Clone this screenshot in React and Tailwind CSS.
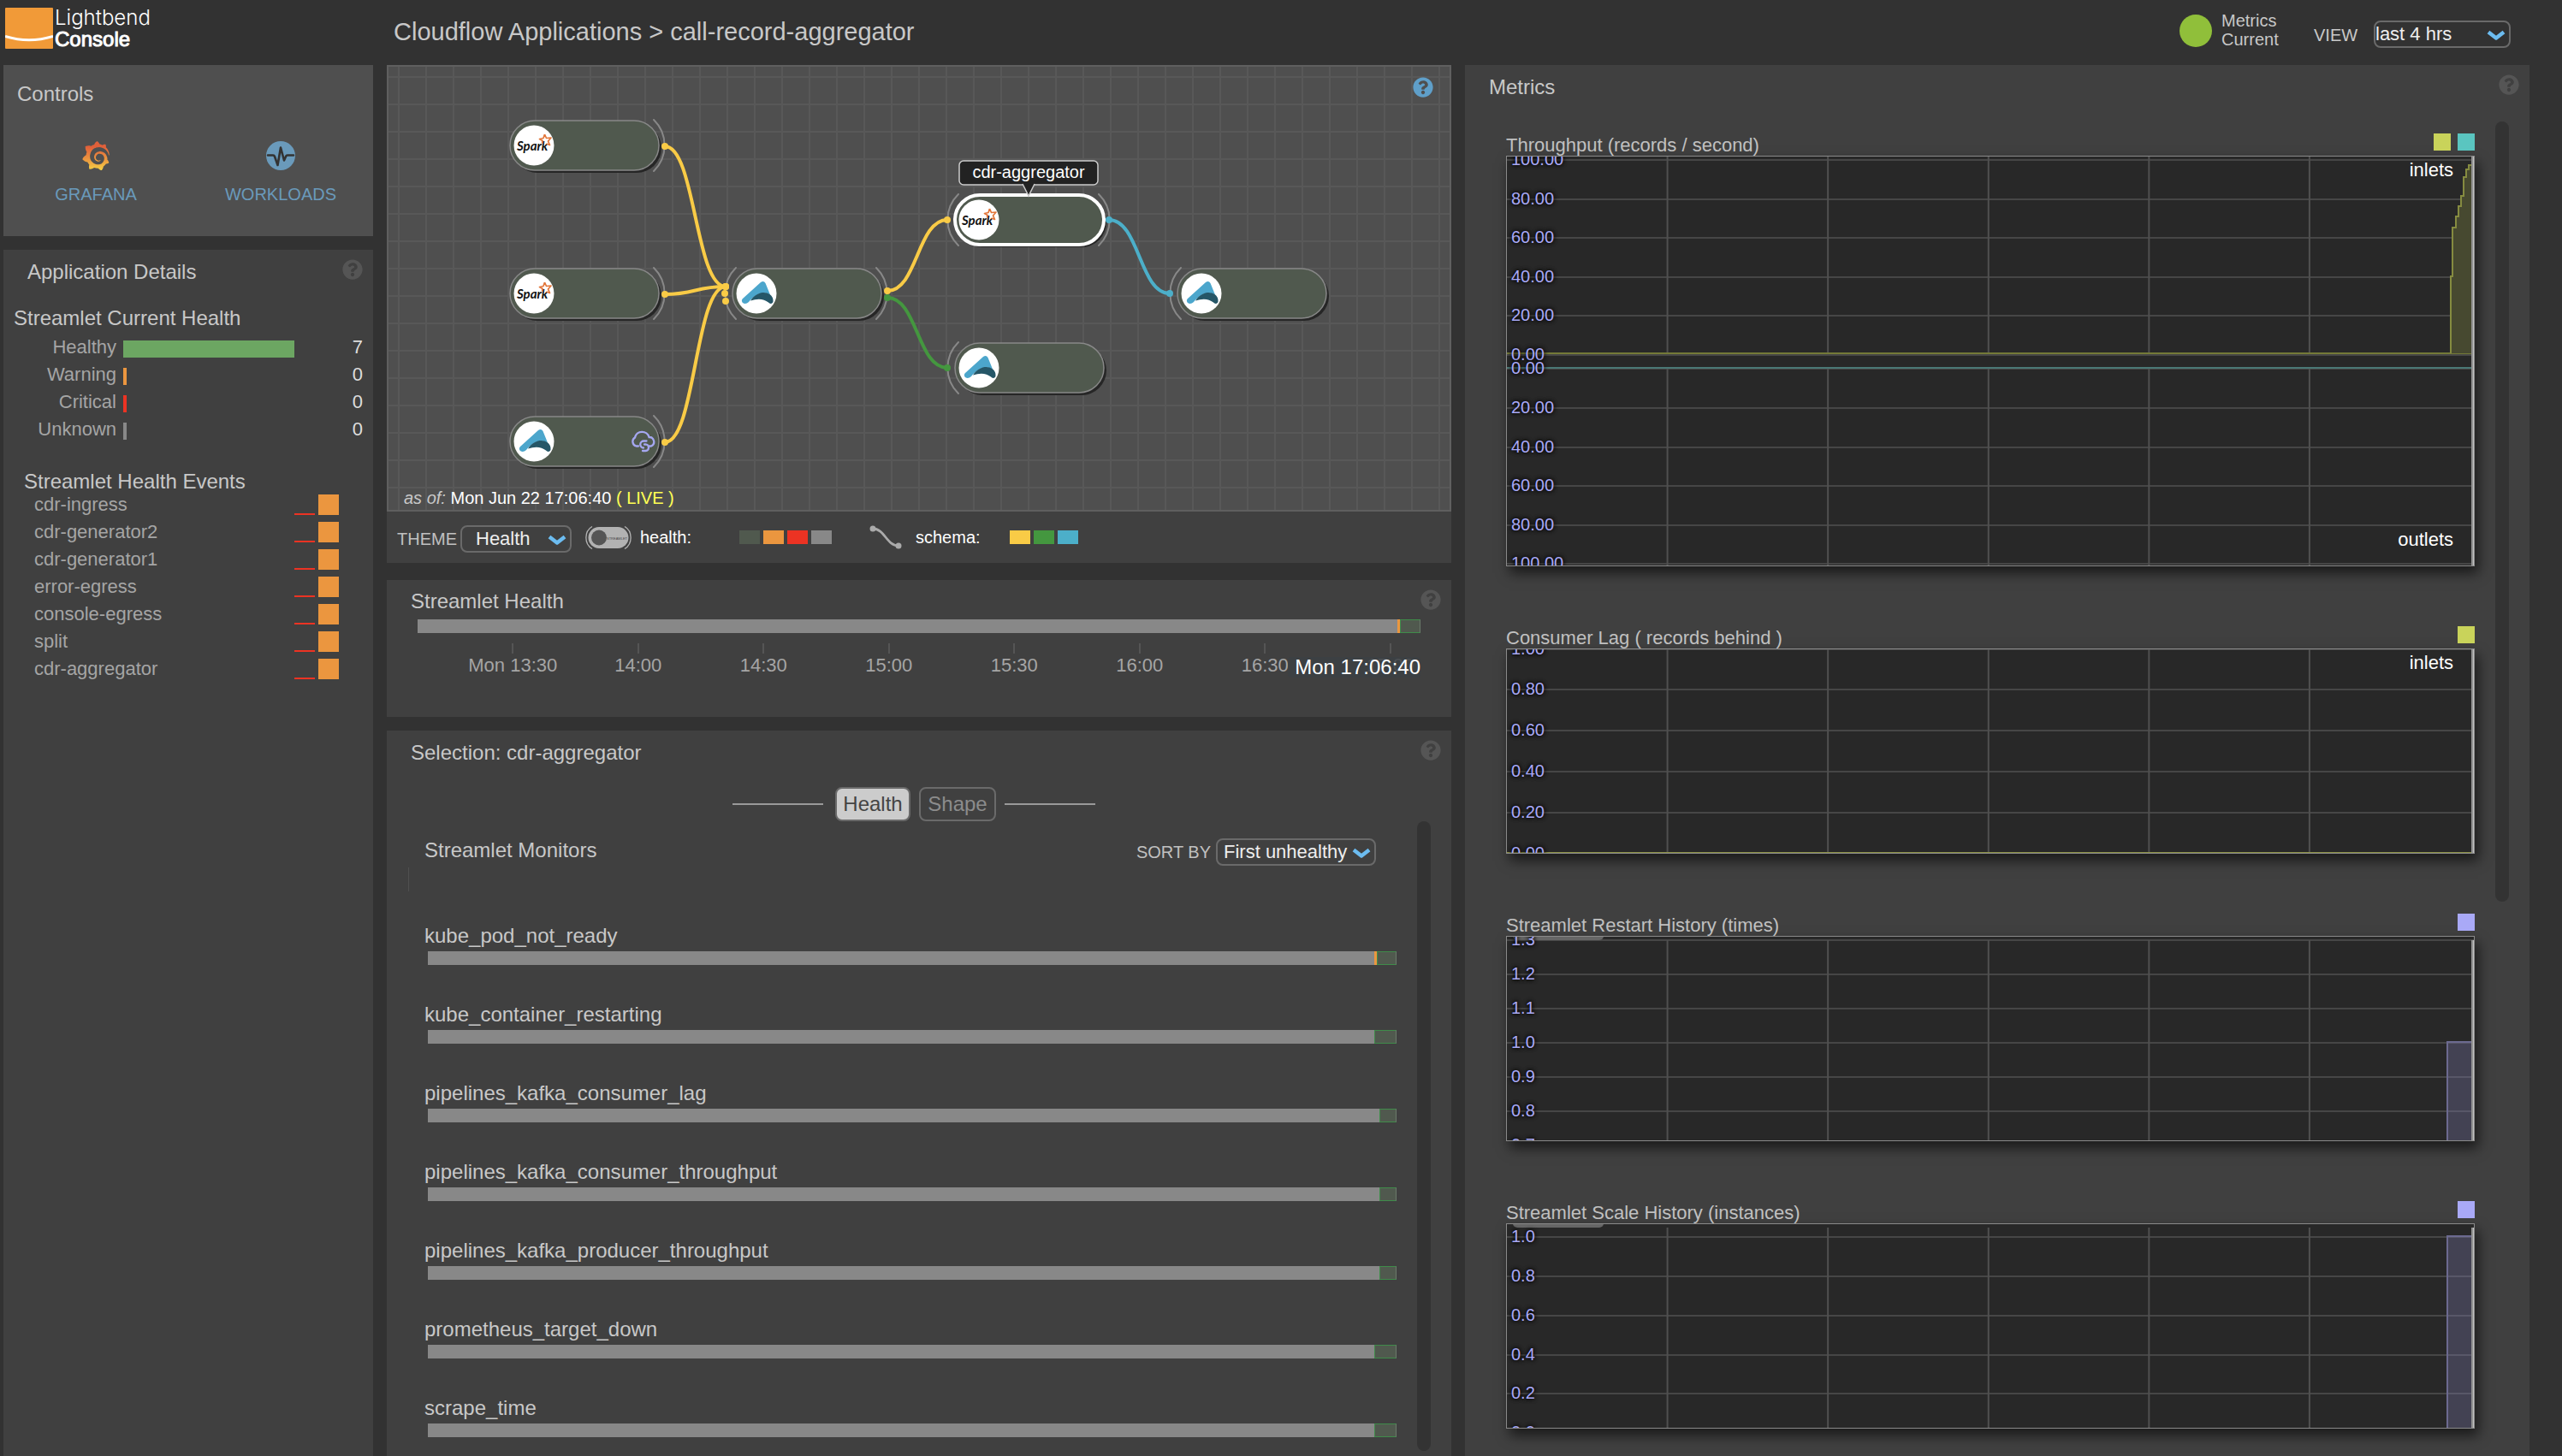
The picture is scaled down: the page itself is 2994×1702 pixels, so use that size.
import { FaQuestionCircle } from "react-icons/fa";
import { SiGrafana } from "react-icons/si";

const FONT = "font-['Liberation_Sans',Arial,sans-serif]";

function HelpButton({ blue }) {
  return (
    <button
      type="button"
      aria-label="Help"
      className={"absolute " + (blue ? "top-3 right-[19px] text-[#5f9fc9]" : "top-[11px] right-3 text-[#555555]")}
    >
      <FaQuestionCircle className="size-6" />
    </button>
  );
}

function Select({ id, label, value, box, field }) {
  return (
    <div className={"relative " + box}>
      <select
        id={id}
        aria-label={label}
        defaultValue={value}
        className={
          "block h-8 w-full appearance-none rounded-lg border-2 border-[#6a6a6a] bg-transparent text-[22px] leading-7 text-[#eeeeee] " +
          field
        }
      >
        <option>{value}</option>
      </select>
      <svg viewBox="0 0 22 14" className="pointer-events-none absolute top-[11px] right-1.5 h-[14px] w-[22px]" fill="none">
        <path d="M2 2.5 L11 9.5 L20 2.5" stroke="#6cbcf0" strokeWidth="4.5" strokeLinejoin="round" />
      </svg>
    </div>
  );
}

/* ---------- header ---------- */

function Header() {
  return (
    <header className="flex h-[76px] shrink-0 items-start">
      <div className="flex w-[448px] shrink-0 items-start gap-0.5 pt-2 pl-0.5">
        <svg viewBox="0 0 56 50" className="h-[50px] w-14">
          <rect x="0" y="1" width="56" height="48" rx="1" fill="#f19a38" />
          <path d="M0 34.5 Q28 43 56 34.5" stroke="#ffffff" strokeWidth="3" fill="none" />
        </svg>
        <div className="text-white">
          <div className="font-['Inter',sans-serif] text-[24px] leading-[26px] font-light">Lightbend</div>
          <div className="text-[24px] leading-6 [-webkit-text-stroke:1px_white]">Console</div>
        </div>
      </div>
      <h1 className="flex-1 pt-[19px] pl-2 text-[29px] leading-9 text-[#c8c8c8]">
        Cloudflow Applications &gt; call-record-aggregator
      </h1>
      <div className="flex items-start pr-[22px] text-[20px] text-[#c8c8c8]">
        <span className="mt-[17px] size-[38px] rounded-full bg-[#90bf3a]" />
        <p className="mt-[13px] ml-[11px] w-[108px] leading-[22px]">
          Metrics
          <br />
          Current
        </p>
        <label htmlFor="view" className="mt-[27px] w-[70px] leading-7">
          VIEW
        </label>
        <Select id="view" value="last 4 hrs" box="mt-6 w-40" field="pl-0" />
      </div>
    </header>
  );
}

/* ---------- left column ---------- */

const healthCounts = [
  { name: "Healthy", count: 7, bar: "w-[200px] bg-[#6ca662]" },
  { name: "Warning", count: 0, bar: "w-1 bg-[#eb963f]" },
  { name: "Critical", count: 0, bar: "w-1 bg-[#ec3323]" },
  { name: "Unknown", count: 0, bar: "w-1 bg-[#888888]" },
];

const events = [
  "cdr-ingress",
  "cdr-generator2",
  "cdr-generator1",
  "error-egress",
  "console-egress",
  "split",
  "cdr-aggregator",
];

function Sidebar() {
  return (
    <aside className="flex w-[432px] shrink-0 flex-col gap-4">
      <section className="h-[200px] bg-[#4f4f4f] pt-5 text-[#c8c8c8]">
        <h2 className="pl-4 text-[24px] leading-7">Controls</h2>
        <div className="mt-[41px] grid grid-cols-2 text-center text-[20px] leading-7 text-[#6a9abb]">
          <a href="#grafana" className="flex flex-col items-center gap-[14px]">
            <svg width="0" height="0" className="absolute">
              <linearGradient id="grafana-fill" x1="0" y1="0" x2="0" y2="1">
                <stop offset="0.2" stopColor="#e0603a" />
                <stop offset="0.65" stopColor="#eb9a40" />
                <stop offset="1" stopColor="#f5d145" />
              </linearGradient>
            </svg>
            <SiGrafana className="size-[34px]" fill="url(#grafana-fill)" />
            GRAFANA
          </a>
          <a href="#workloads" className="flex flex-col items-center gap-[14px]">
            <svg viewBox="0 0 34 34" className="size-[34px]" fill="none">
              <circle cx="17" cy="17" r="17" fill="#6a9abb" />
              <path
                d="M2 16.5 H8 Q9.5 16.5 10 18 L13.5 28 L17 7.5 L21 22.5 L23 18 Q23.5 16.5 25 16.5 H32"
                stroke="#333333"
                strokeWidth="2.6"
                strokeLinecap="round"
                strokeLinejoin="round"
              />
            </svg>
            WORKLOADS
          </a>
        </div>
      </section>

      <section className="relative flex-1 bg-[#404040] pt-2">
        <HelpButton />
        <h2 className="pl-7 text-[24px] leading-9 text-[#c8c8c8]">Application Details</h2>
        <h3 className="mt-5 pl-3 text-[24px] leading-8 text-[#c8c8c8]">Streamlet Current Health</h3>
        <div className="mt-1">
          {healthCounts.map((h) => (
            <div key={h.name} className="flex h-8 items-start pr-3 text-[22px] leading-7">
              <span className="w-[132px] text-right text-[#a5a5a5]">{h.name}</span>
              <span className={"mt-1.5 ml-2 h-5 " + h.bar} />
              <span className="ml-auto text-[#dddddd]">{h.count}</span>
            </div>
          ))}
        </div>
        <h3 className="mt-8 pl-6 text-[24px] leading-[22px] text-[#c8c8c8]">Streamlet Health Events</h3>
        <ul>
          {events.map((e) => (
            <li key={e} className="flex h-8 items-center pr-10 pl-9 text-[22px] leading-8 text-[#a5a5a5]">
              {e}
              <span className="mr-1 mb-1 ml-auto h-0.5 w-6 self-end bg-[#ec3323]" />
              <span className="size-6 bg-[#eb963f]" />
            </li>
          ))}
        </ul>
      </section>
    </aside>
  );
}

/* ---------- blueprint diagram ---------- */

const nodes = [
  { x: 596, y: 170, kind: "spark", out: true },
  { x: 596, y: 343, kind: "spark", out: true },
  { x: 596, y: 516, kind: "akka", out: true, ingress: true },
  { x: 856, y: 343, kind: "akka", in: true, out: true },
  { x: 1116, y: 257, kind: "spark", in: true, out: true, selected: true },
  { x: 1116, y: 430, kind: "akka", in: true },
  { x: 1376, y: 343, kind: "akka", in: true },
];

const Y = "#f9cb46";
const G = "#44973f";
const B = "#4cafc9";

const wires = [
  { from: [777, 171], to: [848, 335], color: Y },
  { from: [777, 344], to: [848, 335], color: Y },
  { from: [777, 517], to: [848, 335], color: Y },
  { from: [1037, 340], to: [1107, 257], color: Y },
  { from: [1037, 348], to: [1107, 430], color: G },
  { from: [1296, 257], to: [1367, 343], color: B },
];

function SparkLogo() {
  return (
    <>
      <text
        x="-20"
        y="6"
        fontSize="15"
        fontStyle="italic"
        fontWeight="700"
        fill="#111111"
        fontFamily="Lato, sans-serif"
      >
        Spark
      </text>
      <path
        d="M12.5 -13 L14.5 -8.5 L20 -9 L16.5 -5 L18.5 -0.5 L14.5 -2 M9.5 -2.5 L10 -5.5 L6.5 -7.5 L11 -8.5 L12.5 -13"
        fill="none"
        stroke="#e2763a"
        strokeWidth="1.7"
        strokeLinejoin="round"
      />
    </>
  );
}

function AkkaLogo() {
  return (
    <>
      <path
        d="M-16 6 L5 -13 Q8.5 -15.5 10.5 -12 L16 1.5 C8 -3 -1 0 -9 10 C-11.5 12.5 -15 12.5 -16.5 10.5 Q-18 8 -16 6 Z"
        fill="#4ca6cc"
      />
      <path d="M-7 8.5 C0 -2 10 -2.5 15.5 1 Q20 4.5 19.5 9.5 C19 12.5 15.5 12.5 14 10.5 Q6 4 -7 8.5 Z" fill="#255667" />
    </>
  );
}

function Node({ n }) {
  return (
    <g transform={`translate(${n.x} ${n.y})`}>
      <rect x="3" y="-26" width="174" height="58" rx="29" fill="#262626" />
      <rect
        x="0"
        y="-29"
        width="174"
        height="58"
        rx="29"
        fill="#50594e"
        stroke={n.selected ? "#ffffff" : "#888888"}
        strokeWidth={n.selected ? 4 : 1.5}
      />
      {n.out && <path d="M168 -30 A42 42 0 0 1 168 30" fill="none" stroke="#888888" strokeWidth="2" strokeLinecap="round" />}
      {n.in && <path d="M4 -30 A42 42 0 0 0 4 30" fill="none" stroke="#888888" strokeWidth="2" strokeLinecap="round" />}
      <g transform="translate(28 0)">
        <circle r="23.5" fill="#ffffff" />
        {n.kind === "spark" ? <SparkLogo /> : <AkkaLogo />}
      </g>
      {n.ingress && (
        <path
          d="M150 5.5 H147.500 A5.500 5.500 0 0 1 146 -4.500 A8.500 8.500 0 0 1 162.500 -5 A5.500 5.500 0 0 1 165 5.500 H163 M159.500 -0.500 H156.500 A4 4 0 0 0 156 7.500 M157 3.500 H159 A3.800 3.800 0 0 1 158.500 11 H155"
          fill="none"
          stroke="#a5a7f0"
          strokeWidth="2.3"
          strokeLinecap="round"
        />
      )}
    </g>
  );
}

function Blueprint() {
  return (
    <div className="relative border-2 border-[#5f5f5f] bg-[#4f4f4f] bg-[linear-gradient(to_right,#585858_2px,transparent_2px),linear-gradient(to_bottom,#585858_2px,transparent_2px)] bg-[size:32px_32px] bg-[position:11px_11px]">
      <svg className="block h-[518px] w-full">
        <g transform="translate(-454 -78)">
          {nodes.map((n) => (
            <Node key={`${n.x}-${n.y}`} n={n} />
          ))}
          {wires.map((w, i) => {
            const mid = (w.from[0] + w.to[0]) / 2;
            return (
              <g key={i}>
                <path
                  d={`M${w.from[0]} ${w.from[1]} C${mid} ${w.from[1]} ${mid} ${w.to[1]} ${w.to[0]} ${w.to[1]}`}
                  fill="none"
                  stroke={w.color}
                  strokeWidth="4"
                />
                <circle cx={w.from[0]} cy={w.from[1]} r="4" fill={w.color} />
                <circle cx={w.to[0]} cy={w.to[1]} r="4" fill={w.color} />
              </g>
            );
          })}
          <circle cx="847" cy="343" r="4" fill={Y} />
          <circle cx="848" cy="352" r="4" fill={Y} />
          <rect x="1121" y="188" width="162" height="28" rx="5" fill="#222222" stroke="#cccccc" strokeWidth="1.5" />
          <path d="M1195 215 L1202 229 L1209 215" fill="#222222" stroke="#cccccc" strokeWidth="1.5" />
          <text x="1202" y="208" textAnchor="middle" fontSize="20" fill="#ffffff">
            cdr-aggregator
          </text>
        </g>
      </svg>
      <HelpButton blue />
      <p className="absolute bottom-0 left-[18px] text-[20px] leading-7 text-white">
        <i className="text-[#c8c8c8]">as of:</i> Mon Jun 22 17:06:40 <span className="text-[#ffff54]">( LIVE )</span>
      </p>
    </div>
  );
}

function Toolbar() {
  return (
    <div className="flex h-[60px] items-center bg-[#404040] pl-3 text-[20px] leading-7">
      <div className="mt-1 flex items-center">
        <label htmlFor="theme" className="w-[74px] text-[#c0c0c0]">
          THEME
        </label>
        <Select id="theme" value="Health" box="w-[130px]" field="pl-4" />
      </div>
      <svg viewBox="0 0 54 27" className="ml-4 h-[27px] w-[54px]" fill="none">
        <rect x="3.5" y="1" width="47" height="25" rx="12.5" fill="#b2b2b2" />
        <circle cx="16" cy="13.5" r="9" fill="#555555" />
        <path d="M8 0.5 C-1.5 6 -1.5 21 8 26.5 M46 0.5 C55.5 6 55.5 21 46 26.5" stroke="#b2b2b2" strokeWidth="1.3" />
        <text x="25" y="15.500" fontSize="4" fill="#444444">
          STREAMLET
        </text>
      </svg>
      <span className="ml-2.5 w-[116px] text-white">health:</span>
      <div className="flex gap-1">
        <span className="h-4 w-6 bg-[#50594e]" />
        <span className="h-4 w-6 bg-[#eb963f]" />
        <span className="h-4 w-6 bg-[#ec3323]" />
        <span className="h-4 w-6 bg-[#888888]" />
      </div>
      <svg viewBox="0 0 38 28" className="ml-11 h-7 w-[38px]" fill="none">
        <path d="M4 4 C18 4 20 24 34 24" stroke="#aaaaaa" strokeWidth="2.8" />
        <circle cx="4" cy="4" r="3.5" fill="#aaaaaa" />
        <circle cx="34" cy="24" r="3.5" fill="#aaaaaa" />
      </svg>
      <span className="ml-4 w-[110px] text-white">schema:</span>
      <div className="flex gap-1">
        <span className="h-4 w-6 bg-[#f9cb46]" />
        <span className="h-4 w-6 bg-[#44973f]" />
        <span className="h-4 w-6 bg-[#4cafc9]" />
      </div>
    </div>
  );
}

/* ---------- health bars ---------- */

function HealthBar({ warn, okWidth }) {
  return (
    <div className="flex h-4">
      <span className="flex-1 bg-[#888888]" />
      {warn && <span className="w-[3px] bg-[#eb963f]" />}
      <span className={"border border-[#3f8c4a] border-r-[#6a7a6a] bg-[#50594e] " + okWidth} />
    </div>
  );
}

const ticks = ["Mon 13:30", "14:00", "14:30", "15:00", "15:30", "16:00", "16:30", "17:00"];

function StreamletHealth() {
  return (
    <section className="relative mt-5 h-40 shrink-0 overflow-hidden bg-[#404040] pt-[11px]">
      <HelpButton />
      <h2 className="pl-7 text-[24px] leading-7 text-[#c8c8c8]">Streamlet Health</h2>
      <div className="mx-9 mt-[7px]">
        <HealthBar warn okWidth="w-6" />
        <div className="relative mt-3">
          <div className="flex text-[22px] leading-7 text-[#a5a5a5]">
            <span className="w-[38px] shrink-0" />
            {ticks.map((t) => (
              <div key={t} className="flex w-1/8 shrink-0 flex-col items-center">
                <span className="h-3 w-0.5 bg-[#555555]" />
                {t}
              </div>
            ))}
          </div>
          <span className="absolute top-4 right-0 rounded-sm bg-[#3c4144]/85 pl-2 text-[24px] leading-6 text-white">
            Mon 17:06:40
          </span>
        </div>
      </div>
    </section>
  );
}

const monitors = [
  { name: "kube_pod_not_ready", warn: true, ok: "w-[23px]" },
  { name: "kube_container_restarting", ok: "w-[26px]" },
  { name: "pipelines_kafka_consumer_lag", ok: "w-5" },
  { name: "pipelines_kafka_consumer_throughput", ok: "w-5" },
  { name: "pipelines_kafka_producer_throughput", ok: "w-5" },
  { name: "prometheus_target_down", ok: "w-[26px]" },
  { name: "scrape_time", ok: "w-[26px]" },
];

function Selection() {
  return (
    <section className="relative mt-4 flex min-h-0 flex-1 flex-col bg-[#404040] pt-3">
      <HelpButton />
      <h2 className="pl-7 text-[24px] leading-7 text-[#c8c8c8]">Selection: cdr-aggregator</h2>
      <div className="mt-[26px] flex items-center justify-center gap-2.5 pr-3 text-[24px] leading-9">
        <span className="h-0.5 w-[106px] bg-[#999999]" />
        <button
          type="button"
          className="ml-1 h-10 w-[88px] rounded-lg border-2 border-[#6a6a6a] bg-[#cccccc] text-[#444444]"
        >
          Health
        </button>
        <button type="button" className="h-10 w-[90px] rounded-lg border-2 border-[#6a6a6a] text-[#8c8c8c]">
          Shape
        </button>
        <span className="h-0.5 w-[106px] bg-[#999999]" />
      </div>
      <div className="flex min-h-0 flex-1 pr-6">
        <div className="flex-1 overflow-hidden pt-5">
          <div className="flex items-center pr-12 pl-11">
            <h3 className="self-start text-[24px] leading-7 text-[#c8c8c8]">Streamlet Monitors</h3>
            <label htmlFor="sort" className="ml-auto pr-1.5 text-[20px] leading-8 text-[#c0c0c0]">
              SORT BY
            </label>
            <Select id="sort" value="First unhealthy" box="w-[187px]" field="pl-[7px]" />
          </div>
          <div className="mt-0.5 mb-[38px] ml-[25px] h-7 w-px bg-[#505050]" />
          {monitors.map((m) => (
            <div key={m.name} className="mb-11 pr-6 pl-11">
              <h4 className="mb-1 text-[24px] leading-7 text-[#c8c8c8]">{m.name}</h4>
              <div className="pl-1">
                <HealthBar warn={m.warn} okWidth={m.ok} />
              </div>
            </div>
          ))}
        </div>
        <div className="mb-1.5 w-4 rounded-full bg-[#333333]" />
      </div>
    </section>
  );
}

/* ---------- metrics ---------- */

function Chart({ title, legend, height, rows, gridSegments, tab, notes = [], children }) {
  return (
    <section className="mb-[70px]">
      <div className="flex h-[26px] items-start gap-2">
        <h3 className="flex-1 text-[22px] leading-7 text-[#c0c0c0]">{title}</h3>
        {legend.map((c) => (
          <span key={c} className={"size-5 " + c} />
        ))}
      </div>
      <svg
        className="block w-full border border-[#8a8a8a] bg-[#282828] shadow-[4px_8px_14px_rgba(0,0,0,0.6)]"
        style={{ height }}
        role="img"
        aria-label={title}
      >
        {rows.map(([label, y], i) => (
          <line key={i} x1="0" x2="100%" y1={y} y2={y} stroke="#464646" strokeWidth="2" />
        ))}
        {[1, 2, 3, 4, 5].map((k) =>
          gridSegments.map(([a, b]) => (
            <line
              key={`${k}-${a}`}
              x1={`${k * 16.6}%`}
              x2={`${k * 16.6}%`}
              y1={a}
              y2={b}
              stroke="#505050"
              strokeWidth="2"
            />
          ))
        )}
        {children}
        {tab && <rect x="7" y="-6" width="106" height="10" rx="5" fill="#666666" />}
        <svg x="100%" overflow="visible">
          <line x1="-2" x2="-2" y1={tab ? 4 : 0} y2={height} stroke="#909090" strokeWidth="2" />
          <line x1="0" x2="0" y1={tab ? 4 : 0} y2={height} stroke="#c0c0c0" strokeWidth="2" />
          {notes.map(([text, y]) => (
            <text key={text} x="-24" y={y} textAnchor="end" fontSize="22" fill="#ffffff">
              {text}
            </text>
          ))}
        </svg>
        {rows.map(([label, y], i) => (
          <text
            key={i}
            x="5"
            y={y + 6}
            fontSize="20"
            fill="#a9a9f7"
            className="[text-shadow:0_0_5px_#000000,0_0_5px_#000000]"
          >
            {label}
          </text>
        ))}
      </svg>
    </section>
  );
}

function Metrics() {
  return (
    <main className="relative min-w-0 flex-1 overflow-hidden bg-[#404040] pt-3">
      <HelpButton />
      <h2 className="pl-7 text-[24px] leading-7 text-[#c8c8c8]">Metrics</h2>
      <div className="mt-[26px] flex pr-6 pl-12">
        <div className="min-w-0 flex-1 pt-[14px] pr-6">
          <Chart
            title="Throughput (records / second)"
            legend={["bg-[#c9d35a]", "bg-[#5ac5c0]"]}
            height={480}
            rows={[
              ["100.00", 4],
              ["80.00", 50],
              ["60.00", 95],
              ["40.00", 141],
              ["20.00", 186],
              ["0.00", 232],
              ["0.00", 248],
              ["20.00", 294],
              ["40.00", 340],
              ["60.00", 385],
              ["80.00", 431],
              ["100.00", 476],
            ]}
            gridSegments={[
              [0, 231],
              [248, 480],
            ]}
            notes={[
              ["inlets", 23],
              ["outlets", 455],
            ]}
          >
            <line x1="0" x2="100%" y1="230" y2="230" stroke="#747a38" strokeWidth="2" />
            <line x1="0" x2="100%" y1="247" y2="247" stroke="#4a7875" strokeWidth="2" />
            <svg x="100%" overflow="visible">
              <path
                d="M-27 230 V140 H-25 V83 H-21 V70 H-18 V58 H-15 V46 H-12 V24 H-9 V15 H-6 V10 H0 V230 Z"
                fill="#474930"
              />
              <path
                d="M-27 230 V140 H-25 V83 H-21 V70 H-18 V58 H-15 V46 H-12 V24 H-9 V15 H-6 V10 H0"
                fill="none"
                stroke="#858b40"
                strokeWidth="2"
              />
            </svg>
          </Chart>
          <Chart
            title="Consumer Lag ( records behind )"
            legend={["bg-[#c9d35a]"]}
            height={240}
            rows={[
              ["1.00", 0],
              ["0.80", 47],
              ["0.60", 95],
              ["0.40", 143],
              ["0.20", 191],
              ["0.00", 239],
            ]}
            gridSegments={[[0, 240]]}
            notes={[["inlets", 23]]}
          >
            <line x1="0" x2="100%" y1="238" y2="238" stroke="#8d9347" strokeWidth="2" />
          </Chart>
          <Chart
            title="Streamlet Restart History (times)"
            legend={["bg-[#a9a9f7]"]}
            height={240}
            tab
            rows={[
              ["1.3", 4],
              ["1.2", 44],
              ["1.1", 84],
              ["1.0", 124],
              ["0.9", 164],
              ["0.8", 204],
              ["0.7", 244],
            ]}
            gridSegments={[[4, 240]]}
          >
            <svg x="100%" overflow="visible">
              <rect x="-31" y="123" width="40" height="130" fill="#8582b8" fillOpacity="0.3" stroke="#6c6a90" strokeWidth="2" />
            </svg>
          </Chart>
          <Chart
            title="Streamlet Scale History (instances)"
            legend={["bg-[#a9a9f7]"]}
            height={240}
            tab
            rows={[
              ["1.0", 15],
              ["0.8", 61],
              ["0.6", 107],
              ["0.4", 153],
              ["0.2", 198],
              ["0.0", 244],
            ]}
            gridSegments={[[4, 240]]}
          >
            <svg x="100%" overflow="visible">
              <rect x="-31" y="14" width="40" height="240" fill="#8582b8" fillOpacity="0.3" stroke="#6c6a90" strokeWidth="2" />
            </svg>
          </Chart>
        </div>
        <div className="h-[912px] w-4 rounded-full bg-[#333333]" />
      </div>
    </main>
  );
}

export default function App() {
  return (
    <div className={"flex h-screen flex-col overflow-hidden bg-[#323232] pr-[38px] pl-1 " + FONT}>
      <Header />
      <div className="flex min-h-0 flex-1 gap-4">
        <Sidebar />
        <div className="flex min-w-0 flex-1 flex-col">
          <Blueprint />
          <Toolbar />
          <StreamletHealth />
          <Selection />
        </div>
        <Metrics />
      </div>
    </div>
  );
}
